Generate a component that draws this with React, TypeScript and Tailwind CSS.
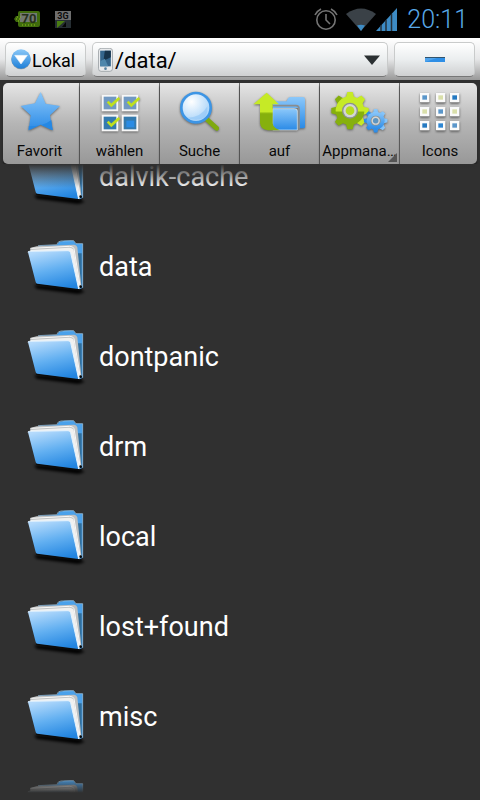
import type { ReactNode } from "react";

function BatteryIcon() {
  return (
    <svg viewBox="0 0 26 18" className="h-[18px] w-[26px]" role="img" aria-label="Battery 70 percent">
      <path d="M6 1h18q2 0 2 2v12q0 2-2 2H6q-2 0-2-2v-3H2L0 9l2-3h2V3q0-2 2-2z" fill="#3f6b0c" />
      <rect x="6" y="3" width="17" height="9" fill="#737970" />
      <text x="15" y="13" textAnchor="middle" fontSize="13" fontWeight="700" fontFamily="Roboto, sans-serif" fill="#26301c">70</text>
      <path d="M2 9h5M3 7h4M4 11h3M8 15h13" stroke="#94bd22" strokeWidth="1" strokeDasharray="1 2" />
    </svg>
  );
}

function NetworkIcon() {
  return (
    <svg viewBox="0 0 16 17" className="h-[17px] w-4" role="img" aria-label="3G">
      <rect width="16" height="9" fill="#6e6e6e" />
      <text x="8" y="8" textAnchor="middle" fontSize="9" fontWeight="700" fontFamily="Roboto, sans-serif" fill="#0b0b0b">3G</text>
      <rect y="9" width="16" height="8" fill="#262e33" />
      <path d="M2 10h8l-8 7z" fill="#4a7d12" />
      <path d="M7 16l4-5v5z" fill="#060606" />
    </svg>
  );
}

function AlarmIcon() {
  return (
    <svg viewBox="0 0 26 24" className="h-6 w-[26px]" fill="none" stroke="#747474" strokeWidth="1.6" aria-hidden="true">
      <circle cx="13" cy="13" r="9.2" />
      <path d="M13 7v6l4 4M2 8q2-4 6-6M24 8q-2-4-6-6" />
    </svg>
  );
}

function WifiIcon() {
  return (
    <svg viewBox="0 0 30 23" className="h-[23px] w-[30px]" aria-hidden="true">
      <path d="M0 6Q15-5 30 6L15 23z" fill="#3a4147" />
      <path d="M11 17.500Q15 16 19 17.500L15 23z" fill="#3d8bc4" />
    </svg>
  );
}

function SignalIcon() {
  return (
    <svg viewBox="0 0 21 23" className="h-[23px] w-[21px]" aria-hidden="true">
      <path d="M0 23L21 0v23z" fill="#3d8bc4" />
      <path d="M5 17v6M10 12v11M15.500 6v17" stroke="#253039" strokeWidth="1.500" />
    </svg>
  );
}

function StatusBar() {
  return (
    <header className="flex h-[38px] items-center bg-black pl-3.5 pr-3">
      <BatteryIcon />
      <div className="ml-[15px]"><NetworkIcon /></div>
      <div className="ml-auto flex items-center">
        <AlarmIcon />
        <div className="ml-[7px] flex items-center"><WifiIcon /></div>
        <SignalIcon />
        <time className="ml-2.5 text-[25px] leading-none font-light text-[#58a9e8]">20:11</time>
      </div>
    </header>
  );
}

const boxStyle =
  "flex h-[35px] items-center rounded-[5px] border border-[#c9cbcb] border-b-[#777] bg-linear-to-b from-white via-[#ebeeef] to-[#cfd0d1] text-black";

function LocationBar() {
  return (
    <div className="flex gap-1.5 bg-linear-to-b from-white via-[#e6e7e8] to-[#999] px-[5px] pt-1 pb-[3px]">
      <button type="button" className={boxStyle + " w-[81px] pl-[5px]"}>
        <svg viewBox="0 0 60 63" className="h-[21px] w-5" aria-hidden="true">
          <defs>
            <linearGradient id="ball" x1="0" y1="0" x2="0" y2="1">
              <stop offset="0" stopColor="#8ac8f8" />
              <stop offset="1" stopColor="#1d7fd8" />
            </linearGradient>
          </defs>
          <circle cx="30" cy="32" r="29" fill="#8b9aa5" />
          <circle cx="30" cy="30" r="29" fill="url(#ball)" />
          <path d="M11 19h38L30 45z" fill="#fff" stroke="#e5f1fa" strokeWidth="2" />
        </svg>
        <span className="ml-px pt-0.5 text-[18px]">Lokal</span>
      </button>
      <label className={boxStyle + " min-w-0 flex-1 pl-[5px] pr-[7px]"}>
        <svg viewBox="0 0 44 72" className="h-6 w-[15px] shrink-0" aria-hidden="true">
          <rect x="1" y="1" width="42" height="69" rx="8" fill="#e8eaec" stroke="#8a8f94" strokeWidth="2" />
          <rect x="6" y="8" width="32" height="47" fill="#34658c" />
          <path d="M20 8h18v20L16 38z" fill="#17344c" />
          <path d="M6 55V40l14-8 10 23z" fill="#4d86ac" />
          <circle cx="22" cy="62" r="4" fill="#56809f" />
        </svg>
        <select aria-label="Path" className="ml-0.5 min-w-0 flex-1 appearance-none bg-transparent pt-0.5 text-[22px] leading-8 outline-none">
          <option>/data/</option>
        </select>
        <svg viewBox="0 0 16 10" className="h-2.5 w-4 shrink-0" aria-hidden="true">
          <path d="M0 0.500h16L8 10z" fill="#2b3032" />
        </svg>
      </label>
      <button type="button" aria-label="Minimize" className={boxStyle + " w-[81px] justify-center"}>
        <svg viewBox="0 0 20 5" className="h-[5px] w-5" aria-hidden="true">
          <rect width="20" height="5" fill="#2f8fe6" />
          <path d="M0 1h12L0 5z" fill="#4fa3ec" />
          <rect width="20" height="1" fill="#31546e" />
        </svg>
      </button>
    </div>
  );
}

function IconDefs() {
  return (
    <svg className="absolute size-0" aria-hidden="true">
      <defs>
        <linearGradient id="blue" x1="0" y1="0" x2="0" y2="1">
          <stop offset="0" stopColor="#8cc8fa" />
          <stop offset="1" stopColor="#2a8ae6" />
        </linearGradient>
        <linearGradient id="lime" x1="0" y1="0" x2="0" y2="1">
          <stop offset="0.5" stopColor="#c6ea26" />
          <stop offset="0.56" stopColor="#86b00d" />
        </linearGradient>
        <linearGradient id="front" x1="0.3" y1="0" x2="0.6" y2="1">
          <stop offset="0" stopColor="#b4dafc" />
          <stop offset="0.5" stopColor="#63b0f1" />
          <stop offset="1" stopColor="#2385e0" />
        </linearGradient>
        <radialGradient id="lens" cx="0.35" cy="0.3" r="0.8">
          <stop offset="0" stopColor="#fff" />
          <stop offset="1" stopColor="#9ccdf8" />
        </radialGradient>
        <filter id="soft" x="-20%" y="-100%" width="140%" height="300%">
          <feGaussianBlur stdDeviation="4" />
        </filter>
      </defs>
    </svg>
  );
}

function StarIcon() {
  return (
    <>
      <path d="M122 42l15 35 43 7-30 28 8 45-36-17-36 17 6-45-30-28 43-8z" fill="url(#blue)" />
      <path d="M86 145q45 0 68-19l4 31-36-17-36 17z" fill="#2588e4" />
    </>
  );
}

function CheckIcon() {
  const boxes = [[65, 50], [125, 50], [65, 110], [125, 110]];
  return (
    <>
      {boxes.map(([x, y], i) => (
        <g key={i}>
          <rect x={x} y={y} width="50" height="50" fill="#f7f7f7" />
          <rect x={x + 6} y={y + 6} width="38" height="38" fill={i < 2 ? "#7199c2" : "#347aae"} />
          {i === 3 && <rect x={x + 14} y={y + 18} width="24" height="20" fill="#298be4" />}
          {i < 3 && (
            <path d={`M${x + 18} ${y + 21}l11 11 24-22`} fill="none" stroke="#bfe01e" strokeWidth="8" />
          )}
        </g>
      ))}
    </>
  );
}

function SearchIcon() {
  return (
    <>
      <path d="M142 125l28 26" stroke="#7faa10" strokeWidth="14" strokeLinecap="round" />
      <circle cx="108" cy="89" r="44" fill="url(#lens)" stroke="#3d95e5" strokeWidth="8" />
      <path d="M82 119q42 0 60-34 4 40-34 40-16 0-26-6z" fill="#8dc5f7" opacity="0.6" />
    </>
  );
}

function UpIcon() {
  return (
    <>
      <path d="M98 80q0-10 10-10h32q4-13 12-13h36q7 0 7 7v82q0 5-6 5h-13V90H98z" fill="url(#blue)" />
      <path d="M98 83h70q9 0 9 9v60" fill="none" stroke="#8a8d8e" strokeWidth="5" />
      <path d="M98 92h66q8 0 8 7v57H98z" fill="url(#blue)" stroke="#e4f1fb" strokeWidth="2" />
      <path d="M80 44l37 35H98v57q2 15 22 21H84q-22-2-24-22V79H40z" fill="url(#lime)" />
    </>
  );
}

function Gear({ x, y, size, fill, hub }: { x: number; y: number; size: number; fill: string; hub: string }) {
  return (
    <g transform={`translate(${x} ${y}) scale(${size})`}>
      <g fill={fill}>
        {[0, 45, 90, 135].map((a) => (
          <path key={a} d="M-12-40L-8-56H8L12-40V40L8 56H-8L-12 40z" transform={`rotate(${a})`} />
        ))}
        <circle r="43" />
      </g>
      <circle r="24" fill="#8b9190" />
      <circle r="20" fill="#d4d6d6" />
      <circle r="13" fill={hub} />
    </g>
  );
}

function GearsIcon() {
  return (
    <>
      <Gear x={90} y={98} size={1} fill="url(#lime)" hub="#b7dc22" />
      <Gear x={167} y={128} size={0.63} fill="url(#blue)" hub="#5c94c0" />
    </>
  );
}

function GridIcon() {
  const fills = ["#5a96ca", "#d9dfaa", "#2579c1", "#d9dfaa", "#5a96ca", "#d9dfaa", "#2579c1", "#2d86d3", "#5a96ca"];
  return (
    <>
      {fills.map((fill, i) => {
        const x = [60, 108, 150][i % 3];
        const y = [45, 87, 129][Math.floor(i / 3)];
        return (
          <g key={i}>
            <rect x={x} y={y + 3} width="28" height="27" fill="#999" />
            <rect x={x} y={y} width="28" height="27" fill="#fafafa" />
            <rect x={x + 7} y={y + 7} width="14" height="13" fill={fill} />
          </g>
        );
      })}
    </>
  );
}

const tools: { label: string; icon: ReactNode; more?: boolean }[] = [
  { label: "Favorit", icon: <StarIcon /> },
  { label: "wählen", icon: <CheckIcon /> },
  { label: "Suche", icon: <SearchIcon /> },
  { label: "auf", icon: <UpIcon /> },
  { label: "Appmana…", icon: <GearsIcon />, more: true },
  { label: "Icons", icon: <GridIcon /> },
];

function Toolbar() {
  return (
    <nav className="grid grid-cols-6 pt-[3px]">
      {tools.map((tool) => (
        <button
          key={tool.label}
          type="button"
          className="relative flex h-[81px] flex-col items-center border-r border-[#6e6e6e] bg-linear-to-b from-[#e6e6e6] via-[#b5b5b5] via-50% to-[#989898] pt-[5px] text-[#080808] shadow-[0_3px_2px_#202020] first:ml-[3px] first:rounded-l-[5px] first:pr-[3px] last:mr-[3px] last:rounded-r-[5px] last:border-r-0 last:pl-[3px]"
        >
          <svg viewBox="30 30 180 144" className="h-12 w-[60px] shrink-0 drop-shadow-[0_1px_1px_#666]" aria-hidden="true">
            {tool.icon}
          </svg>
          <span className="mt-1 text-[15px] leading-[22px] whitespace-nowrap">{tool.label}</span>
          {tool.more && (
            <svg viewBox="0 0 9 9" className="absolute right-0.5 bottom-0.5 size-[9px]" aria-hidden="true">
              <path d="M9 0v9H0z" fill="#555" />
            </svg>
          )}
        </button>
      ))}
    </nav>
  );
}

function FolderIcon() {
  return (
    <svg viewBox="18 21 186 180" className="h-[60px] w-[62px] shrink-0" aria-hidden="true">
      <path d="M42 164l140 14 12 8-20 6-124-16z" fill="#000" filter="url(#soft)" />
      <path d="M48 160l126 18 10 0v4l-60-6-76-12z" fill="#0b0b0b" />
      <path d="M54 48l56-3 8-10q20-4 42-3l8 9h20v132l-10 5z" fill="#4ba1ea" />
      <path d="M54 47l56-3q4-11 13-11l38-1 7 9h20v132" fill="none" stroke="#a5cbe8" strokeWidth="2" />
      <path d="M170 70h15v95h-5z" fill="#326f9c" />
      <path d="M30 54l20-5 112-5q8 0 10 8l12 116-8 9-26-80-118-28z" fill="#bfc1c2" />
      <path d="M31 60l116-7q12 0 14 8l19 112-6 4-20-80-120-27z" fill="#f1f1f0" />
      <path d="M34 55l114-6q12 0 14 7l18 110" fill="none" stroke="#f9f9f9" strokeWidth="3" />
      <path d="M24 67q0-3 4-3l116-2q6 0 8 6l24 109-124-16q-4 0-5-5z" fill="url(#front)" />
      <path d="M24 67q0-3 4-3l116-2q6 0 8 6l24 109" fill="none" stroke="#e3f2fe" strokeWidth="3" />
      <circle cx="182" cy="170" r="4" fill="#060606" />
    </svg>
  );
}

const folders = ["dalvik-cache", "data", "dontpanic", "drm", "local", "lost+found", "misc", ""];

function FolderList() {
  return (
    <main className="relative min-h-0 flex-1 overflow-hidden">
      <ul className="-mt-8">
        {folders.map((name) => (
          <li key={name} className="flex h-[90px] items-center gap-[11px] pl-[26px] text-[27px] text-white">
            <FolderIcon />
            <span>{name}</span>
          </li>
        ))}
      </ul>
      <div className="pointer-events-none absolute inset-x-0 top-0 h-6 bg-linear-to-b from-[#303030] to-transparent" />
      <div className="pointer-events-none absolute inset-x-0 bottom-0 h-6 bg-linear-to-t from-[#303030] from-30% to-transparent" />
    </main>
  );
}

export default function App() {
  return (
    <div className="flex h-screen flex-col bg-[#303030] font-[Roboto,'Noto_Sans',sans-serif]">
      <IconDefs />
      <StatusBar />
      <LocationBar />
      <Toolbar />
      <FolderList />
    </div>
  );
}
